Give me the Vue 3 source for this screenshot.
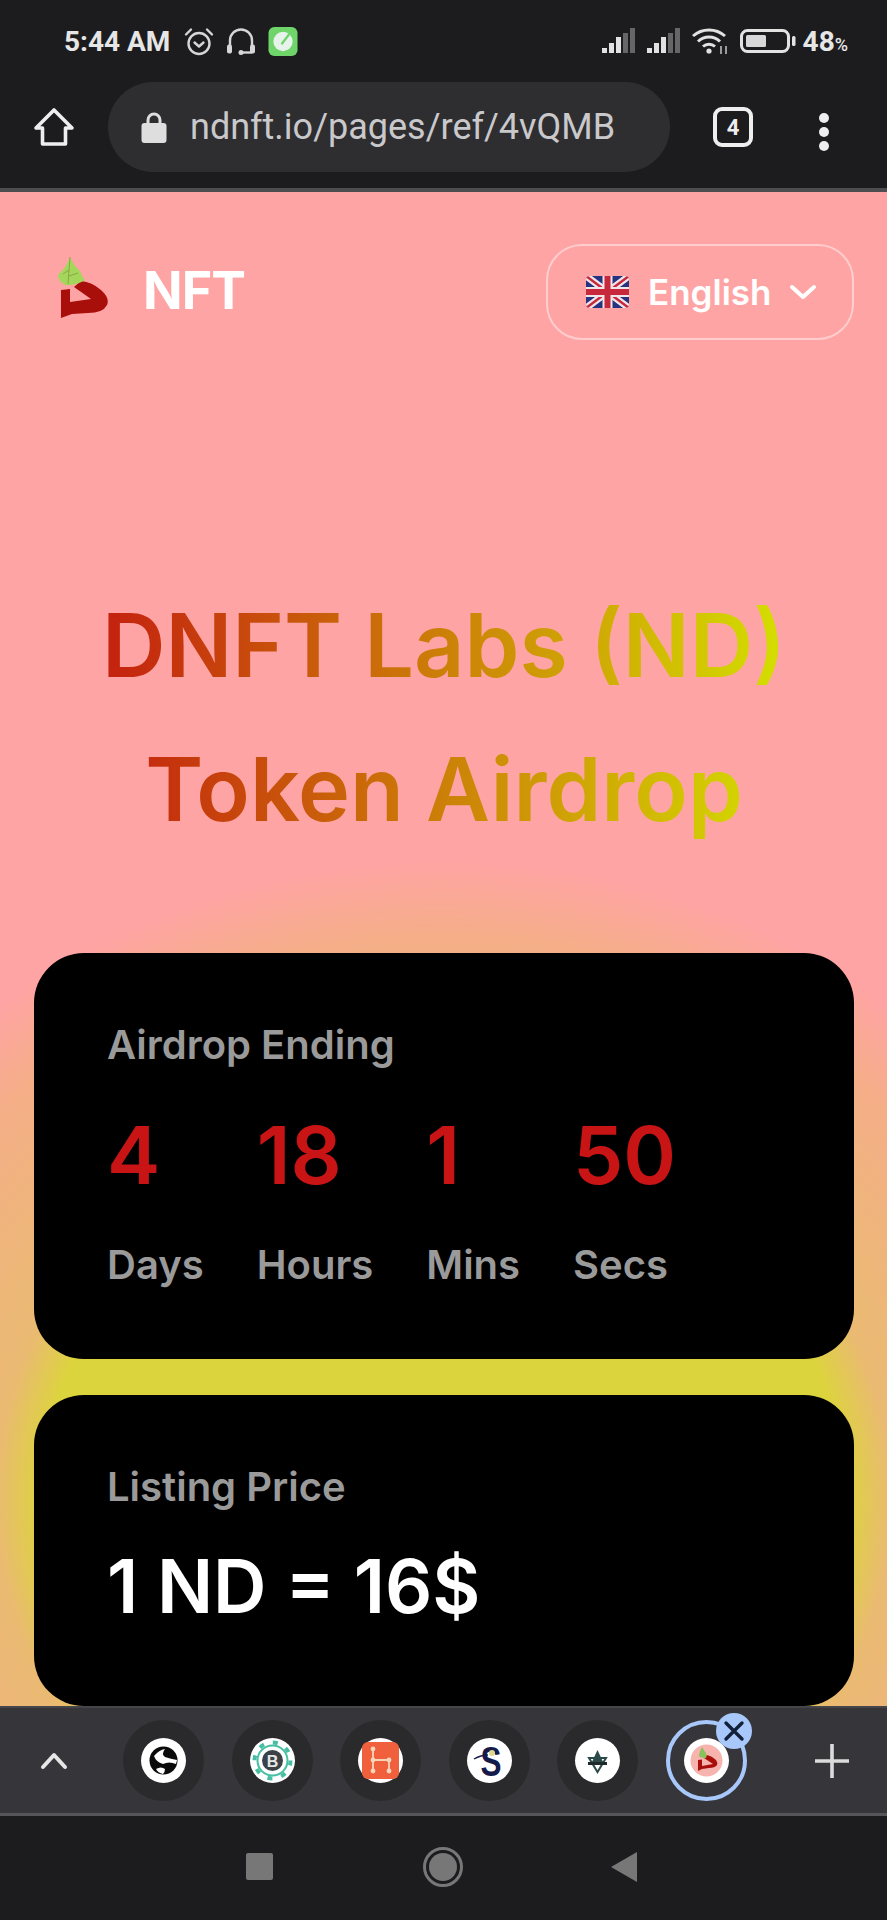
<template>
  <div class="phone">
    <!-- android status bar -->
    <div class="status-bar">
      <span class="time">5:44 AM</span>
      <svg class="st-icon alarm" viewBox="0 0 30 28" fill="none" stroke="#d6d6d6" stroke-width="2.4">
        <circle cx="15" cy="16" r="10.5" />
        <path d="M10.5 15l4.5 4 4.5-4" stroke-linecap="round" stroke-linejoin="round" />
        <path d="M2 7l5-5M28 7l-5-5" stroke-linecap="round" />
      </svg>
      <svg class="st-icon headset" viewBox="0 0 30 28" fill="none" stroke="#d6d6d6" stroke-width="2.4">
        <path d="M4 18V13a11 11 0 0 1 22 0v5" />
        <rect x="1" y="17" width="5" height="9" rx="2" fill="#d6d6d6" stroke="none" />
        <rect x="24" y="17" width="5" height="9" rx="2" fill="#d6d6d6" stroke="none" />
        <path d="M26 25h-9" />
        <circle cx="15" cy="25" r="2.5" fill="#d6d6d6" stroke="none" />
      </svg>
      <svg class="st-icon green" viewBox="0 0 30 30">
        <rect width="30" height="30" rx="6" fill="#6fd56a" />
        <circle cx="15" cy="15" r="10" fill="#e6f2ea" />
        <path d="M14 17l7-9" stroke="#6fd56a" stroke-width="2.4" stroke-linecap="round" />
      </svg>
      <div class="status-right">
        <svg class="signal" viewBox="0 0 34 26">
          <rect x="0" y="20" width="5" height="5" fill="#e2e2e2" />
          <rect x="7" y="15" width="5" height="10" fill="#e2e2e2" />
          <rect x="14" y="9" width="5" height="16" fill="#e2e2e2" />
          <rect x="21" y="5" width="5" height="20" fill="#666" />
          <rect x="28" y="0" width="5" height="25" fill="#666" />
        </svg>
        <svg class="signal second" viewBox="0 0 34 26">
          <rect x="0" y="20" width="5" height="5" fill="#e2e2e2" />
          <rect x="7" y="15" width="5" height="10" fill="#e2e2e2" />
          <rect x="14" y="9" width="5" height="16" fill="#e2e2e2" />
          <rect x="21" y="5" width="5" height="20" fill="#666" />
          <rect x="28" y="0" width="5" height="25" fill="#666" />
        </svg>
        <svg class="wifi" viewBox="0 0 38 28" fill="none" stroke="#e2e2e2" stroke-width="3">
          <path d="M1 9a24 24 0 0 1 32 0" />
          <path d="M6 14.5a16 16 0 0 1 22 0" />
          <path d="M11 19.5a9 9 0 0 1 12 0" />
          <circle cx="17" cy="24" r="2.6" fill="#e2e2e2" stroke="none" />
          <path d="M29 19v8M34 19v8" stroke-width="1.6" stroke="#bbb" />
        </svg>
        <svg class="battery" viewBox="0 0 56 24">
          <rect x="1.5" y="1.5" width="47" height="21" rx="6" fill="none" stroke="#e2e2e2" stroke-width="3" />
          <rect x="6" y="6" width="20" height="12" rx="1.5" fill="#d8d8d8" />
          <rect x="52" y="7" width="3.5" height="10" rx="1.5" fill="#e2e2e2" />
        </svg>
        <span class="pct">48<small>%</small></span>
      </div>
    </div>

    <!-- browser toolbar -->
    <div class="toolbar">
      <svg class="home" viewBox="0 0 42 40" fill="none" stroke="#eee" stroke-width="3.6" stroke-linejoin="round">
        <path d="M21 3L3 21h6.500v16h23V21H39z" />
      </svg>
      <div class="url-pill">
        <svg class="lock" viewBox="0 0 26 32">
          <path d="M7 14V9a6 6 0 0 1 12 0v5" fill="none" stroke="#dedede" stroke-width="3" />
          <rect x="0.500" y="12" width="25" height="20" rx="3" fill="#dedede" />
        </svg>
        <span class="url">ndnft.io/pages/ref/4vQMB</span>
      </div>
      <div class="tab-count">4</div>
      <div class="menu-dots"><i></i><i></i><i></i></div>
    </div>

    <!-- page -->
    <main class="page">
      <header class="top">
        <div class="brand">
          <svg class="logo" viewBox="27 16 52 62">
            <path d="M31 50L40 49V62L61 59L44 47L51 41Q62 42 71 50Q80 58 77 65Q73 73 58 73L42 74L31 78Z" fill="#a90f0a" />
            <path d="M40 17Q44 26 50 31Q52 37 55 40Q46 46 35 45Q28 41 28 35Q36 28 40 17Z" fill="#a5d65c" />
            <path d="M40 17L38 44M33 34L39 30M39 36L48 33" stroke="#80913a" stroke-width="0.700" fill="none" />
          </svg>
          <span class="brand-name">NFT</span>
        </div>
        <button class="lang">
          <svg class="flag" viewBox="0 0 43 32">
            <defs>
              <clipPath id="flag-clip"><rect width="43" height="32" rx="4" /></clipPath>
            </defs>
            <g clip-path="url(#flag-clip)">
              <rect width="43" height="32" fill="#27337e" />
              <path d="M0 0L43 32M43 0L0 32" stroke="#f0e6ea" stroke-width="7" />
              <path d="M0 0L43 32M43 0L0 32" stroke="#c8283c" stroke-width="2.500" />
              <path d="M21.500 0V32M0 16H43" stroke="#f0e6ea" stroke-width="10" />
              <path d="M21.500 0V32M0 16H43" stroke="#c8283c" stroke-width="6" />
            </g>
          </svg>
          <span>English</span>
          <svg class="chev" viewBox="0 0 28 16" fill="none" stroke="#fff" stroke-width="4" stroke-linecap="round" stroke-linejoin="round">
            <path d="M3 3l11 10L25 3" />
          </svg>
        </button>
      </header>

      <h1 class="title">DNFT Labs (ND)<br />Token Airdrop</h1>

      <section class="card countdown">
        <div class="card-label">Airdrop Ending</div>
        <div class="timer">
          <div v-for="unit in units" :key="unit.label" class="unit">
            <div class="unit-value">{{ unit.value }}</div>
            <div class="unit-label">{{ unit.label }}</div>
          </div>
        </div>
      </section>

      <section class="card price">
        <div class="card-label">Listing Price</div>
        <div class="price-value">1 ND = 16$</div>
      </section>
    </main>

    <!-- tab strip -->
    <div class="tab-strip">
      <svg class="up" viewBox="0 0 28 18" fill="none" stroke="#e6e6e6" stroke-width="4" stroke-linecap="round" stroke-linejoin="round">
        <path d="M3 15L14 3l11 12" />
      </svg>
      <div class="tabs">
        <div v-for="tab in tabs" :key="tab" class="tab" :class="{ active: tab === 'ndnft' }">
          <div class="favicon">
            <svg v-if="tab === 'globe'" viewBox="0 0 45 45">
              <circle cx="22.500" cy="22.500" r="14" fill="#0b0b0b" />
              <path d="M13 18Q18 12 24 11Q20 16 24 19Q30 21 36 22L35 26Q28 23 22 26Q15 24 13 18ZM15 31Q20 28 24 31Q24 34 22 36Q17 35 15 31Z" fill="#fff" />
            </svg>
            <svg v-else-if="tab === 'gear'" viewBox="0 0 45 45">
              <circle cx="22.500" cy="22.500" r="15" fill="none" stroke="#47bfa2" stroke-width="2" />
              <circle cx="22.500" cy="22.500" r="18" fill="none" stroke="#47bfa2" stroke-width="4" stroke-dasharray="5 9.100" />
              <circle cx="22.500" cy="22.500" r="10.500" fill="#3a4248" />
              <text x="22.500" y="28.500" text-anchor="middle" class="fav-b">B</text>
            </svg>
            <svg v-else-if="tab === 'graph'" viewBox="0 0 45 45">
              <rect x="4" y="4" width="37" height="37" rx="6" fill="#f0603c" />
              <path d="M15 11V33M15 22H31V33" stroke="#f8d5b8" stroke-width="1.800" fill="none" />
              <g fill="#f8d5b8">
                <circle cx="15" cy="11" r="2.400" /><circle cx="15" cy="22" r="2.400" /><circle cx="15" cy="33" r="2.400" />
                <circle cx="31" cy="22" r="2.400" /><circle cx="31" cy="33" r="2.400" />
              </g>
            </svg>
            <svg v-else-if="tab === 'swan'" viewBox="0 0 45 45">
              <text transform="translate(24 38) scale(0.75 1)" text-anchor="middle" class="fav-s">S</text>
              <path d="M7 21Q14 17 21 17" stroke="#141a4a" stroke-width="1.400" fill="none" />
              <circle cx="25" cy="15" r="3" fill="#dcd98e" />
            </svg>
            <svg v-else-if="tab === 'star'" viewBox="0 0 45 45">
              <path d="M22.500 12L29 26H16Z" fill="#2c4a4a" />
              <path d="M14 20H31L22.500 34Z" fill="none" stroke="#2c4a4a" stroke-width="2" />
              <rect x="13" y="24" width="19" height="3" fill="#1c2a2a" />
            </svg>
            <svg v-else viewBox="0 0 45 45">
              <circle cx="22.500" cy="22.500" r="16" fill="#f7b3ad" />
              <path d="M14 22L18 21.500V28L29 26L20 20L23 17Q28 18 32 22Q34 25 33 27Q31 30 25 30L18 31L14 33Z" fill="#a90f0a" />
              <path d="M18 9Q20 13 22 15Q23 18 22 20Q17 20 15 18Q15 15 18 9Z" fill="#86c35a" />
            </svg>
          </div>
          <div v-if="tab === 'ndnft'" class="tab-close">
            <svg viewBox="0 0 22 22" fill="none" stroke="#12203a" stroke-width="3.400" stroke-linecap="round">
              <path d="M3 3l16 16M19 3L3 19" />
            </svg>
          </div>
        </div>
      </div>
      <svg class="plus" viewBox="0 0 34 34" stroke="#dcdcdc" stroke-width="3.600">
        <path d="M17 0V34M0 17H34" />
      </svg>
    </div>

    <!-- android nav -->
    <nav class="nav-bar">
      <div class="nav-square"></div>
      <div class="nav-circle"><div></div></div>
      <svg class="nav-back" viewBox="0 0 26 30"><path d="M26 0V30L0 15Z" fill="#777" /></svg>
    </nav>
  </div>
</template>

<script setup>
const units = [
  { value: '4', label: 'Days' },
  { value: '18', label: 'Hours' },
  { value: '1', label: 'Mins' },
  { value: '50', label: 'Secs' }
]

const tabs = ['globe', 'gear', 'graph', 'swan', 'star', 'ndnft']
</script>

<style scoped>
.phone {
  width: 887px;
  height: 1920px;
  display: flex;
  flex-direction: column;
  overflow: hidden;
  background: #1c1c1e;
  font-family: "Inter", "Liberation Sans", sans-serif;
}

/* status bar */
.status-bar {
  height: 82px;
  flex-shrink: 0;
  display: flex;
  align-items: center;
  padding: 0 39px 0 64px;
  color: #e6e6e6;
  font-family: "Roboto", sans-serif;
}

.time {
  font-size: 28px;
  font-weight: 700;
  margin-right: 14px;
  white-space: nowrap;
}

.st-icon {
  width: 30px;
  height: 29px;
  margin-right: 12px;
}

.status-right {
  margin-left: auto;
  display: flex;
  align-items: center;
}

.signal {
  width: 34px;
  height: 26px;
}

.signal.second {
  margin-left: 11px;
}

.wifi {
  width: 38px;
  height: 28px;
  margin-left: 11px;
}

.battery {
  width: 56px;
  height: 24px;
  margin-left: 10px;
}

.pct {
  font-size: 28px;
  font-weight: 700;
  margin-left: 7px;
}

.pct small {
  font-size: 18px;
  font-weight: 500;
}

/* toolbar */
.toolbar {
  height: 110px;
  flex-shrink: 0;
  display: flex;
  align-items: flex-start;
  padding-left: 33px;
  border-bottom: 4px solid #4d4d50;
  box-sizing: border-box;
}

.home {
  width: 42px;
  height: 40px;
  margin-top: 25px;
}

.url-pill {
  width: 562px;
  height: 90px;
  margin-left: 33px;
  border-radius: 45px;
  background: #2e2e31;
  display: flex;
  align-items: center;
  padding-left: 33px;
  box-sizing: border-box;
}

.lock {
  width: 26px;
  height: 32px;
  margin-right: 23px;
}

.url {
  font-family: "Roboto", sans-serif;
  font-size: 36px;
  color: #c9c9cc;
  white-space: nowrap;
}

.tab-count {
  width: 40px;
  height: 40px;
  margin: 25px 0 0 43px;
  box-sizing: border-box;
  border: 4px solid #eee;
  border-radius: 9px;
  color: #eee;
  font-family: "Roboto", sans-serif;
  font-size: 22px;
  font-weight: 700;
  display: flex;
  align-items: center;
  justify-content: center;
}

.menu-dots {
  margin: 31px 0 0 66px;
  display: flex;
  flex-direction: column;
  gap: 4px;
}

.menu-dots i {
  width: 10px;
  height: 10px;
  border-radius: 50%;
  background: #eee;
}

/* page */
.page {
  height: 1514px;
  flex-shrink: 0;
  overflow: hidden;
  padding: 52px 33px 0 34px;
  box-sizing: border-box;
  background: radial-gradient(ellipse 700px 640px at 50% 1308px, #dcd43c 0%, #dcd43c 57%, #eaba72 64%, #f5ae88 88%, #ffa4a4 100%) #ffa4a4;
}

.top {
  display: flex;
  justify-content: space-between;
  align-items: center;
}

.brand {
  display: flex;
  align-items: center;
  margin-left: 23px;
}

.logo {
  width: 52px;
  height: 62px;
  margin-bottom: 10px;
}

.brand-name {
  margin-left: 34px;
  font-size: 52px;
  font-weight: 700;
  letter-spacing: -1px;
  color: #fff;
  margin-bottom: 4px;
}

.lang {
  width: 308px;
  height: 96px;
  box-sizing: border-box;
  border: 2px solid rgba(255, 255, 255, 0.45);
  border-radius: 36px;
  background: none;
  display: flex;
  align-items: center;
  padding: 0 0 0 38px;
  color: #fff;
  font-family: inherit;
  font-size: 35px;
  font-weight: 600;
}

.flag {
  width: 43px;
  height: 32px;
  margin-right: 19px;
}

.chev {
  width: 28px;
  height: 16px;
  margin-left: 18px;
}

.title {
  margin: 233px 0 0;
  text-align: center;
  font-size: 88px;
  font-weight: 600;
  line-height: 144px;
  background: linear-gradient(90deg, #c4200f 8%, #d4e000 92%);
  -webkit-background-clip: text;
  background-clip: text;
  color: transparent;
}

.card {
  background: #000;
  border-radius: 50px;
  padding: 0 73px;
}

.countdown {
  margin-top: 92px;
  height: 406px;
  padding-top: 67px;
  box-sizing: border-box;
}

.price {
  margin-top: 36px;
  height: 311px;
  padding-top: 67px;
  box-sizing: border-box;
}

.card-label {
  font-size: 40px;
  font-weight: 600;
  line-height: 50px;
  color: #9a9a9a;
}

.timer {
  display: flex;
  gap: 53px;
  margin-top: 30px;
}

.unit-value {
  font-size: 80px;
  font-weight: 600;
  line-height: 110px;
  color: #c81414;
}

.unit-label {
  margin-top: 30px;
  font-size: 40px;
  font-weight: 600;
  line-height: 50px;
  color: #9a9a9a;
}

.price-value {
  margin-top: 24px;
  font-size: 74px;
  font-weight: 600;
  line-height: 100px;
  color: #fff;
  white-space: nowrap;
}

/* tab strip */
.tab-strip {
  height: 110px;
  flex-shrink: 0;
  box-sizing: border-box;
  background: #36363a;
  border-top: 2px solid #46464a;
  border-bottom: 3px solid #55555a;
  display: flex;
  align-items: center;
  position: relative;
}

.up {
  width: 28px;
  height: 18px;
  margin-left: 40px;
}

.tabs {
  display: flex;
  gap: 27.500px;
  margin-left: 55px;
}

.tab {
  width: 81px;
  height: 81px;
  border-radius: 50%;
  background: #2a2a2c;
  display: flex;
  align-items: center;
  justify-content: center;
  position: relative;
  box-sizing: border-box;
}

.tab.active {
  background: none;
  border: 4px solid #a8c7fa;
}

.favicon {
  width: 45px;
  height: 45px;
  border-radius: 50%;
  background: #fff;
}

.favicon svg {
  display: block;
  width: 45px;
  height: 45px;
  overflow: visible;
}

.fav-b {
  font-family: "Liberation Sans", sans-serif;
  font-size: 16px;
  font-weight: 700;
  fill: #e6e6e6;
}

.fav-s {
  font-family: "Liberation Sans", sans-serif;
  font-size: 42px;
  font-weight: 700;
  fill: #141a4a;
}

.tab-close {
  position: absolute;
  top: -11px;
  right: -9px;
  width: 36px;
  height: 36px;
  border-radius: 50%;
  background: #a8c7fa;
  display: flex;
  align-items: center;
  justify-content: center;
}

.tab-close svg {
  width: 22px;
  height: 22px;
}

.plus {
  width: 34px;
  height: 34px;
  margin-left: 68px;
}

/* android nav */
.nav-bar {
  flex: 1;
  display: flex;
  align-items: center;
  padding-left: 246px;
  padding-bottom: 3px;
}

.nav-square {
  width: 27px;
  height: 27px;
  border-radius: 2px;
  background: #777;
}

.nav-circle {
  width: 40px;
  height: 40px;
  margin-left: 150px;
  box-sizing: border-box;
  border: 3px solid #777;
  border-radius: 50%;
  padding: 3px;
}

.nav-circle div {
  width: 100%;
  height: 100%;
  border-radius: 50%;
  background: #777;
}

.nav-back {
  width: 26px;
  height: 30px;
  margin-left: 148px;
}
</style>
